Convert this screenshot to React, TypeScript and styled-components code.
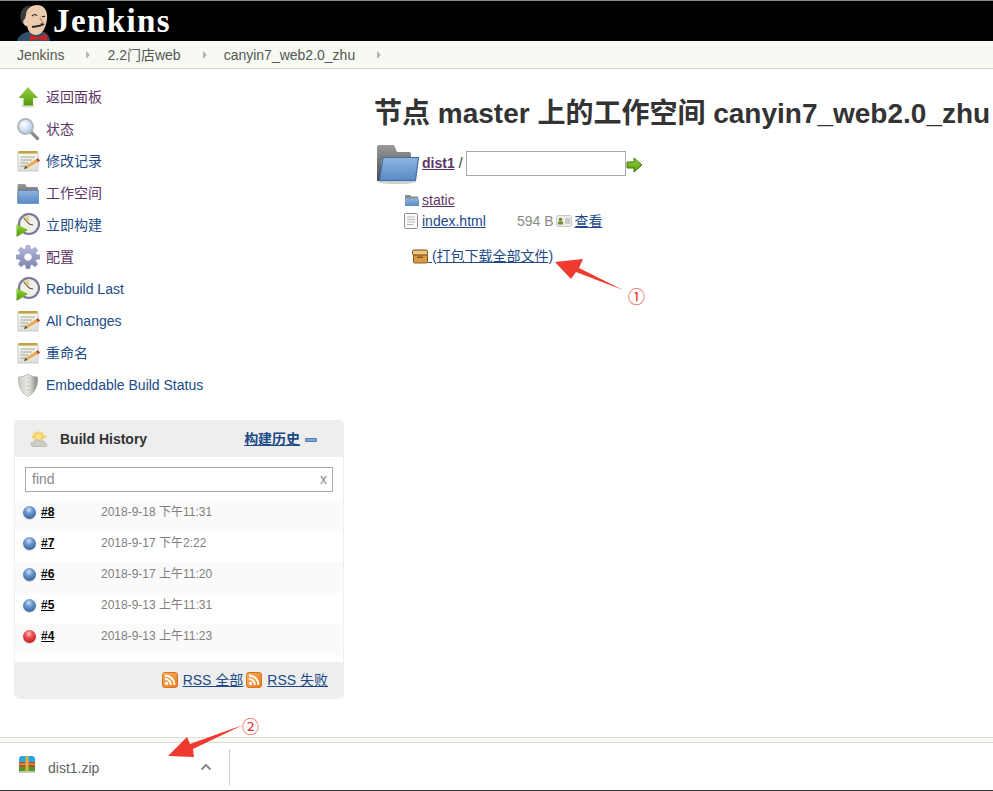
import React from "react";
import styled, { createGlobalStyle } from "styled-components";

const CJK = `"Liberation Sans", "Noto Sans CJK SC", sans-serif`;

const GlobalStyle = createGlobalStyle`
    html, body {
        margin: 0;
        padding: 0;
        background: #fff;
    }
    body {
        font-family: ${CJK};
        font-size: 14px;
        line-height: 16px;
        color: #333;
    }
    a {
        color: #204a87;
        text-decoration: underline;
    }
`;

const Page = styled.div`
    position: relative;
    width: 993px;
    height: 791px;
    overflow: hidden;
    display: flex;
    flex-direction: column;
`;

const Header = styled.header`
    height: 40px;
    flex: none;
    background: #000;
    border-top: 1px solid #8c8c8c;
    display: flex;
    align-items: flex-end;
    padding-left: 17px;
    gap: 2px;
`;

const Wordmark = styled.span`
    font-family: "Liberation Serif", serif;
    font-weight: bold;
    font-size: 33px;
    line-height: 38px;
    letter-spacing: 1.4px;
    color: #fff;
    align-self: center;
`;

const Breadcrumbs = styled.nav`
    height: 26px;
    flex: none;
    background: #f6faf2;
    border-bottom: 1px solid #d3d7cf;
    display: flex;
    align-items: center;
    padding: 1px 0 0 17px;
    color: #555753;
`;

const Crumb = styled.span`
    display: flex;
    align-items: center;
    &::after {
        content: "";
        width: 0;
        height: 0;
        margin: 0 17px 0 22px;
        border-left: 4px solid #b4b7b0;
        border-top: 4px solid transparent;
        border-bottom: 4px solid transparent;
    }
`;

const Body = styled.div`
    flex: 1;
    display: flex;
    min-height: 0;
`;

const Sidebar = styled.aside`
    width: 330px;
    margin-left: 14px;
    flex: none;
    padding-top: 12px;
`;

const TaskList = styled.div`
    display: flex;
    flex-direction: column;
    padding-left: 2px;
`;

const Task = styled.a<{ $visited?: boolean }>`
    height: 32px;
    display: flex;
    align-items: center;
    gap: 6px;
    color: ${(p) => (p.$visited ? "#5c3566" : "#204a87")};
    text-decoration: none;
`;

const Widget = styled.section`
    margin-top: 19px;
    border: 1px solid #eee;
    border-radius: 4px 4px 6px 6px;
    overflow: hidden;
    background: #fff;
`;

const WidgetHead = styled.div`
    height: 36px;
    background: #eee;
    display: flex;
    align-items: center;
    padding-left: 14px;
    font-weight: bold;
    color: #333;
`;

const WidgetTitle = styled.span`
    margin-left: 11px;
`;

const HistoryLink = styled.a`
    margin-left: 97px;
    font-weight: bold;
`;

const CollapseBar = styled.span`
    display: block;
    width: 12px;
    height: 4px;
    margin-left: 5px;
    margin-top: 1px;
    border-radius: 1px;
    background: #7ba3d0;
    border: 1px solid #4f7fb5;
    box-sizing: border-box;
`;

const SearchWrap = styled.div`
    padding: 10px 10px 8px;
`;

const SearchBox = styled.div`
    height: 25px;
    box-sizing: border-box;
    border: 1px solid #a9a9a9;
    display: flex;
    align-items: center;
    justify-content: space-between;
    padding: 0 5px 2px 6px;
    color: #8a8a8a;
`;

const BuildRow = styled.div<{ $alt?: boolean }>`
    height: 31px;
    box-sizing: border-box;
    padding: 0 0 7px 8px;
    display: flex;
    align-items: center;
    background: ${(p) => (p.$alt ? "#fafafa" : "#fff")};
`;

const Ball = styled.span<{ $red?: boolean }>`
    width: 13px;
    height: 13px;
    border-radius: 50%;
    flex: none;
    background: ${(p) =>
        p.$red
            ? "radial-gradient(circle at 45% 30%, #ffc8c8 0, #f05050 32%, #b81414 90%)"
            : "radial-gradient(circle at 45% 30%, #cfe0f2 0, #6f9ad0 32%, #23538f 90%)"};
    box-shadow: 0 1px 1px rgba(0, 0, 0, 0.15);
`;

const BuildLink = styled.a`
    color: #000;
    font-size: 12px;
    font-weight: bold;
    margin-left: 5px;
    width: 60px;
`;

const BuildDate = styled.span`
    font-size: 12px;
    color: #808080;
`;

const WidgetFoot = styled.div`
    margin-top: 7px;
    height: 36px;
    background: #eee;
    display: flex;
    align-items: center;
    justify-content: flex-end;
    padding-right: 15px;
`;

const RssLink = styled.a`
    margin: -1px 3px 0 5px;
    &:last-child {
        margin-right: 0;
    }
`;

const Main = styled.main`
    flex: 1;
    padding: 26px 0 0 30px;
    min-width: 0;
`;

const Title = styled.h1`
    margin: 0;
    font-size: 28px;
    line-height: 37px;
    font-weight: bold;
    color: #333;
    white-space: nowrap;
`;

const PathRow = styled.div`
    display: flex;
    align-items: flex-start;
    margin: 13px 0 0 3px;
    height: 40px;
`;

const DirLink = styled.a`
    color: #5c3566;
    font-weight: bold;
    margin: 10px 0 0 3px;
`;

const Slash = styled.span`
    margin: 10px 3px 0 4px;
`;

const PathInput = styled.div`
    width: 160px;
    height: 25px;
    box-sizing: border-box;
    border: 1px solid #a9a9a9;
    margin-top: 6px;
    background: #fff;
`;

const GoSvg = styled.svg`
    margin-top: 12px;
`;

const Listing = styled.div`
    margin: 4px 0 0 30px;
    display: grid;
    grid-template-columns: 18px 95px auto;
    grid-auto-rows: 21px;
    align-items: center;
    width: 230px;
`;

const FileLink = styled.a<{ $visited?: boolean }>`
    color: ${(p) => (p.$visited ? "#5c3566" : "#204a87")};
`;

const SizeCell = styled.div`
    display: flex;
    align-items: center;
    color: #888a85;
    white-space: nowrap;
`;

const CardSvg = styled.svg`
    margin-left: -1px;
`;

const ViewLink = styled.a`
    margin-left: 2px;
`;

const ZipRow = styled.div`
    display: flex;
    align-items: center;
    margin: 14px 0 0 38px;
    height: 21px;
`;

const ZipLink = styled.a`
    white-space: pre;
`;

const Shelf = styled.footer`
    height: 54px;
    flex: none;
    box-sizing: border-box;
    border-top: 1px solid #dcdfd8;
    background: #fff;
    display: flex;
    flex-direction: column;
`;

const ShelfStrip = styled.div`
    height: 4px;
    background: #f6faf2;
    border-bottom: 1px solid #d9dcd5;
`;

const ShelfBody = styled.div`
    flex: 1;
    display: flex;
    align-items: center;
    padding-left: 19px;
    border-bottom: 1px solid #333;
`;

const ZipSvg = styled.svg`
    margin-top: -5px;
`;

const FileName = styled.span`
    margin-left: 13px;
    margin-top: 3px;
    width: 152px;
    color: #5f6368;
`;

const ShelfDivider = styled.span`
    width: 1px;
    height: 36px;
    background: #c8c8c8;
    margin-left: 17px;
`;

const Note = styled.span<{ $x: number; $y: number }>`
    position: absolute;
    left: ${(p) => p.$x}px;
    top: ${(p) => p.$y}px;
    color: #e8332a;
    font-size: 17px;
    line-height: 17px;
`;

const Overlay = styled.svg`
    position: absolute;
    left: 0;
    top: 0;
    pointer-events: none;
`;

const HiddenSvg = styled.svg`
    position: absolute;
`;

const Defs = () => (
    <HiddenSvg width="0" height="0">
        <defs>
            <linearGradient id="folderFront" x1="0" y1="0" x2="0" y2="1">
                <stop offset="0" stopColor="#8fb4e0" />
                <stop offset="1" stopColor="#5a8ac6" />
            </linearGradient>
            <linearGradient id="folderBack" x1="0" y1="0" x2="0" y2="1">
                <stop offset="0" stopColor="#9a9a9a" />
                <stop offset="1" stopColor="#4c4c4c" />
            </linearGradient>
            <linearGradient id="greenArrow" x1="0" y1="0" x2="0" y2="1">
                <stop offset="0" stopColor="#9ad34a" />
                <stop offset="1" stopColor="#4e9a06" />
            </linearGradient>
            <radialGradient id="lens" cx="0.4" cy="0.35" r="0.7">
                <stop offset="0" stopColor="#ffffff" />
                <stop offset="1" stopColor="#a9c6e8" />
            </radialGradient>
            <linearGradient id="shieldFill" x1="0" y1="0" x2="1" y2="0">
                <stop offset="0" stopColor="#c9c9c2" />
                <stop offset="0.5" stopColor="#ecece8" />
                <stop offset="1" stopColor="#85857e" />
            </linearGradient>
            <linearGradient id="rssFill" x1="0" y1="0" x2="1" y2="1">
                <stop offset="0" stopColor="#fbb161" />
                <stop offset="1" stopColor="#e87a1d" />
            </linearGradient>
            <linearGradient id="gearFill" x1="0" y1="0" x2="0" y2="1">
                <stop offset="0" stopColor="#b6badf" />
                <stop offset="1" stopColor="#7c81ae" />
            </linearGradient>
            <linearGradient id="paperFill" x1="0" y1="0" x2="0" y2="1">
                <stop offset="0" stopColor="#f8f8f4" />
                <stop offset="1" stopColor="#dededa" />
            </linearGradient>
        </defs>
    </HiddenSvg>
);

const UpIcon = () => (
    <svg width="24" height="24" viewBox="0 0 24 24">
        <ellipse cx="12" cy="21" rx="7" ry="1.6" fill="#ddd" />
        <path d="M12 2 L22 13 H17 V20.5 H7.5 V13 H2.5 Z" fill="url(#greenArrow)" />
    </svg>
);

const SearchIcon = () => (
    <svg width="24" height="24" viewBox="0 0 24 24">
        <path d="M14.5 14.5 L21.5 21.5" stroke="#8b8b8b" strokeWidth="3.2" strokeLinecap="round" />
        <circle cx="9.5" cy="9.5" r="7.5" fill="url(#lens)" stroke="#b4b8bc" strokeWidth="2" />
    </svg>
);

const NotepadIcon = () => (
    <svg width="24" height="24" viewBox="0 0 24 24">
        <rect x="1.5" y="3" width="21" height="20" rx="1" fill="#e6e6e2" />
        <rect x="2" y="3" width="20" height="18.5" fill="url(#paperFill)" stroke="#c4c4be" strokeWidth="0.6" />
        <rect x="2.5" y="2" width="19" height="2.6" fill="#c2a245" />
        <path d="M4.5 8 H19 M4.5 11 H16 M4.5 14 H12 M4.5 17 H10" stroke="#a8a8a2" strokeWidth="1" />
        <path d="M8 20 L9.5 16.8 L20 10.5 L22 13 L11.5 19 Z" fill="#e8ab4f" />
        <path d="M20 10.5 L22 13 L24 11.6 L22 9.2 Z" fill="#c9332a" />
        <path d="M8 20 L9.5 16.8 L11.5 19 Z" fill="#5a4a3a" />
    </svg>
);

const FolderIcon = () => (
    <svg width="24" height="24" viewBox="0 0 24 24">
        <path d="M1.5 22 V4 a1 1 0 0 1 1-1 H9 L11 6 H21 a1 1 0 0 1 1 1 V22 Z" fill="url(#folderBack)" />
        <path d="M2 9.5 H22.5 V22.5 H2 Z" fill="url(#folderFront)" stroke="#4a78b0" strokeWidth="0.6" />
    </svg>
);

const LargeFolder = () => (
    <svg width="42" height="40" viewBox="0 0 42 40">
        <ellipse cx="20" cy="37" rx="19" ry="2" fill="#cfcfcf" />
        <path d="M0 36 V2 a2 2 0 0 1 2-2 H17 L20 7 H32 a2 2 0 0 1 2 2 V14 H5 L3 36 Z" fill="url(#folderBack)" />
        <path d="M6 12.5 H41.5 L38.5 35.5 H2.5 Z" fill="url(#folderFront)" stroke="#3f6da3" strokeWidth="1.2" />
    </svg>
);

const BuildNowIcon = () => (
    <svg width="24" height="24" viewBox="0 0 24 24">
        <circle cx="13" cy="11" r="10" fill="#f1efe6" stroke="#77759a" strokeWidth="2.2" />
        <path d="M13 11 L7.5 4.8 A8 8 0 0 1 13 3 Z" fill="#e6d085" />
        <path d="M13 11 L7.5 4.8 M13 11 L17 12" stroke="#444" strokeWidth="1" />
        <path d="M0.5 11 L12 17 L0.5 24 Z" fill="url(#greenArrow)" />
    </svg>
);

// 8 teeth around a round hole
const gearPath = (() => {
    const pts: string[] = [];
    for (let i = 0; i < 8; i++) {
        const a = (i * Math.PI) / 4;
        const at = (r: number, d: number) =>
            `${(12 + r * Math.cos(a + d)).toFixed(2)} ${(12 + r * Math.sin(a + d)).toFixed(2)}`;
        pts.push(at(8.5, -0.3), at(12, -0.16), at(12, 0.16), at(8.5, 0.3));
    }
    return `M${pts.join(" L")} Z M12 8 a4 4 0 1 0 0.01 0 Z`;
})();

const GearIcon = () => (
    <svg width="24" height="24" viewBox="0 0 24 24">
        <path fillRule="evenodd" d={gearPath} fill="url(#gearFill)" stroke="#8a8eb8" strokeWidth="0.5" />
    </svg>
);

const ShieldIcon = () => (
    <svg width="24" height="24" viewBox="0 0 24 24">
        <path d="M12 1 C15 3 19 4 21.5 4 C22 12 20 19 12 23.5 C4 19 2 12 2.5 4 C5 4 9 3 12 1 Z" fill="url(#shieldFill)" stroke="#a0a098" strokeWidth="0.6" />
        <path d="M12 4 V21" stroke="#b0b0a8" strokeWidth="1" strokeDasharray="2 2" />
    </svg>
);

const JenkinsHead = () => (
    <svg width="34" height="38" viewBox="0 0 34 38">
        <path d="M0 38 C1 33 6 30 10 29 L27 29 C31 31 33 34 33 38 Z" fill="#2f5068" />
        <path d="M5 20 C1 12 4 4 13 2 C10 8 9 14 10 24 Z" fill="#3a3a3a" />
        <path d="M9 12 C9 6 14 2 20 2 C27 2 31 8 30 16 C29 25 25 32 19 32 C14 32 11 28 10 23 C6 23 5 17 8 16 Z" fill="#eccbae" />
        <path d="M15 13 C17 11 19 11 20 13 M25 14 C26 13 27 13 28 14" stroke="#222" strokeWidth="1.1" fill="none" />
        <path d="M23 15 L26 20 L23 21" stroke="#a8745a" strokeWidth="1" fill="none" />
        <path d="M15 24 C18 23 22 24 27 21" stroke="#2a2a2a" strokeWidth="2" fill="none" />
        <path d="M13 32 L21 34 L30 31 L30 38 L21 36 L13 38 Z" fill="#d21f1f" />
    </svg>
);

const GoArrow = () => (
    <GoSvg width="17" height="16" viewBox="0 0 17 16">
        <path d="M1 5 H8 V1 L16 8 L8 15 V11 H1 Z" fill="url(#greenArrow)" stroke="#3f7a08" strokeWidth="1" />
    </GoSvg>
);

const SmallFolder = () => (
    <svg width="16" height="16" viewBox="0 0 16 16">
        <path d="M1 14 V3 H6 L7.5 4.5 H14 V14 Z" fill="#8d8d8d" />
        <path d="M1.5 6.5 H15 V14 H1 Z" fill="url(#folderFront)" />
    </svg>
);

const TextIcon = () => (
    <svg width="16" height="16" viewBox="0 0 16 16">
        <rect x="0.5" y="0.5" width="13" height="15" rx="1" fill="#fafafa" stroke="#8f8f8f" />
        <path d="M3 4 H11 M3 6.5 H11 M3 9 H11 M3 11.5 H9" stroke="#b5b5b5" />
    </svg>
);

const CardIcon = () => (
    <CardSvg width="16" height="12" viewBox="0 0 16 12">
        <rect x="0.5" y="0.5" width="15" height="11" rx="1.5" fill="#eeeeea" stroke="#c9c9c4" />
        <circle cx="4.5" cy="4.5" r="1.8" fill="#8a7a3a" />
        <rect x="2" y="6.5" width="5" height="3" fill="#6b8f3a" />
        <path d="M9 4 H14 M9 6 H14 M9 8 H14" stroke="#a9a9a4" />
    </CardSvg>
);

const BoxIcon = () => (
    <svg width="16" height="16" viewBox="0 0 16 16">
        <rect x="1.5" y="6" width="14" height="9" rx="1" fill="#d99a45" stroke="#8a5a1c" />
        <rect x="0.5" y="2" width="15" height="5" rx="1.5" fill="#f2c57c" stroke="#6b4a1c" />
        <rect x="5" y="8.5" width="6" height="1.5" fill="#8a5a1c" />
    </svg>
);

const WeatherIcon = () => (
    <svg width="20" height="20" viewBox="0 0 20 20">
        <path d="M9 1 L10.5 4 L14 2.5 L14 6 L18 7 L15 10 L4 10 L2 7 L5 6 L4.5 2.5 L8 4 Z" fill="#f7d568" />
        <circle cx="9.5" cy="8" r="4" fill="#fbe08a" stroke="#e5b53a" strokeWidth="0.6" />
        <path d="M4 17.5 C1 17.5 1 13 4.5 13 C5.5 10 10 10 11 12.5 C13 10.5 16 12 15.5 14 C18.5 14 19 17.5 16 17.5 Z" fill="#c9cdc6" stroke="#a4a8a0" strokeWidth="0.5" />
    </svg>
);

const RssIcon = () => (
    <svg width="16" height="16" viewBox="0 0 16 16">
        <rect x="0.5" y="0.5" width="15" height="15" rx="2.5" fill="url(#rssFill)" stroke="#d9761c" />
        <circle cx="4.6" cy="11.4" r="1.6" fill="#fff" />
        <path d="M3 7 a6 6 0 0 1 6 6 M3 3.5 a9.5 9.5 0 0 1 9.5 9.5" stroke="#fff" strokeWidth="1.9" fill="none" />
    </svg>
);

const ZipIcon = () => (
    <ZipSvg width="16" height="17" viewBox="0 0 16 17">
        <path d="M0 6 V3 a3 3 0 0 1 3-3 H13 a3 3 0 0 1 3 3 V6 Z" fill="#2ba6e2" />
        <rect x="0" y="6" width="16" height="5" fill="#b9502c" />
        <rect x="0" y="7.5" width="16" height="1.5" fill="#e88a4a" />
        <rect x="0" y="11" width="16" height="4.5" fill="#4c9a2c" />
        <rect x="0" y="15.5" width="16" height="1.5" fill="#c8c8c8" />
        <rect x="6.5" y="0" width="3" height="15.5" fill="#e0b040" />
    </ZipSvg>
);

const Chevron = () => (
    <svg width="12" height="8" viewBox="0 0 12 8">
        <path d="M1.5 6.5 L6 2 L10.5 6.5" stroke="#8a8a8a" strokeWidth="2" fill="none" />
    </svg>
);

const tasks: { label: string; icon: React.ReactNode; visited?: boolean }[] = [
    { label: "返回面板", icon: <UpIcon />, visited: true },
    { label: "状态", icon: <SearchIcon />, visited: true },
    { label: "修改记录", icon: <NotepadIcon /> },
    { label: "工作空间", icon: <FolderIcon />, visited: true },
    { label: "立即构建", icon: <BuildNowIcon /> },
    { label: "配置", icon: <GearIcon />, visited: true },
    { label: "Rebuild Last", icon: <BuildNowIcon /> },
    { label: "All Changes", icon: <NotepadIcon /> },
    { label: "重命名", icon: <NotepadIcon /> },
    { label: "Embeddable Build Status", icon: <ShieldIcon /> },
];

const builds = [
    { id: "#8", date: "2018-9-18 下午11:31" },
    { id: "#7", date: "2018-9-17 下午2:22" },
    { id: "#6", date: "2018-9-17 上午11:20" },
    { id: "#5", date: "2018-9-13 上午11:31" },
    { id: "#4", date: "2018-9-13 上午11:23", failed: true },
];

export default function App() {
    return (
        <Page>
            <GlobalStyle />
            <Defs />
            <Header>
                <JenkinsHead />
                <Wordmark>Jenkins</Wordmark>
            </Header>
            <Breadcrumbs>
                <Crumb>Jenkins</Crumb>
                <Crumb>2.2门店web</Crumb>
                <Crumb>canyin7_web2.0_zhu</Crumb>
            </Breadcrumbs>
            <Body>
                <Sidebar>
                    <TaskList>
                        {tasks.map((t) => (
                            <Task key={t.label} $visited={t.visited}>
                                {t.icon}
                                {t.label}
                            </Task>
                        ))}
                    </TaskList>
                    <Widget>
                        <WidgetHead>
                            <WeatherIcon />
                            <WidgetTitle>Build History</WidgetTitle>
                            <HistoryLink>构建历史</HistoryLink>
                            <CollapseBar />
                        </WidgetHead>
                        <SearchWrap>
                            <SearchBox>
                                <span>find</span>
                                <span>x</span>
                            </SearchBox>
                        </SearchWrap>
                        {builds.map((b, i) => (
                            <BuildRow key={b.id} $alt={i % 2 === 0}>
                                <Ball $red={b.failed} />
                                <BuildLink>{b.id}</BuildLink>
                                <BuildDate>{b.date}</BuildDate>
                            </BuildRow>
                        ))}
                        <WidgetFoot>
                            <RssIcon />
                            <RssLink>RSS 全部</RssLink>
                            <RssIcon />
                            <RssLink>RSS 失败</RssLink>
                        </WidgetFoot>
                    </Widget>
                </Sidebar>
                <Main>
                    <Title>节点 master 上的工作空间 canyin7_web2.0_zhu</Title>
                    <PathRow>
                        <LargeFolder />
                        <DirLink>dist1</DirLink>
                        <Slash>/</Slash>
                        <PathInput />
                        <GoArrow />
                    </PathRow>
                    <Listing>
                        <SmallFolder />
                        <FileLink $visited>static</FileLink>
                        <span />
                        <TextIcon />
                        <FileLink>index.html</FileLink>
                        <SizeCell>
                            594 B&nbsp;
                            <CardIcon />
                            <ViewLink>查看</ViewLink>
                        </SizeCell>
                    </Listing>
                    <ZipRow>
                        <BoxIcon />
                        <ZipLink> (打包下载全部文件)</ZipLink>
                    </ZipRow>
                </Main>
            </Body>
            <Shelf>
                <ShelfStrip />
                <ShelfBody>
                    <ZipIcon />
                    <FileName>dist1.zip</FileName>
                    <Chevron />
                    <ShelfDivider />
                </ShelfBody>
            </Shelf>
            <Overlay width="993" height="791">
                <path d="M555 262 L583 259 L579 268 L623 290 L576 272 L571 279 Z" fill="#f03a30" />
                <path d="M168 756 L187 737 L190 744 L243 725 L193 749 L194 757 Z" fill="#f03a30" />
            </Overlay>
            <Note $x={628} $y={289}>①</Note>
            <Note $x={242} $y={719}>②</Note>
        </Page>
    );
}
